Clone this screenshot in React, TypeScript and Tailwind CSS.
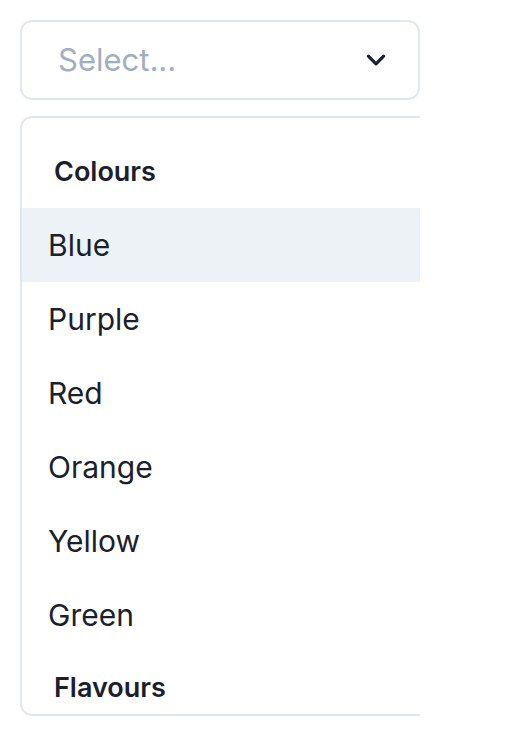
import React from 'react';

const colours = ['Blue', 'Purple', 'Red', 'Orange', 'Yellow', 'Green'];

const ChevronDown = () => (
  <svg width="26" height="26" viewBox="0 0 24 24" fill="none" stroke="#1a202c" strokeWidth="3" strokeLinecap="round" strokeLinejoin="round">
    <path d="M5 8.5l7 7 7-7" />
  </svg>
);

const App: React.FC = () => {
  return (
    <div className="min-h-screen bg-white p-[20px] font-['Inter',sans-serif] text-[#1a202c]">
      <div className="w-[400px]">
        <div className="flex h-[80px] items-center justify-between rounded-[12px] border-2 border-[#e2e8f0] pl-[36px] pr-[29px]">
          <span className="text-[31px] text-[#a0aec0]">Select...</span>
          <ChevronDown />
        </div>
        <div className="mt-[16px] w-[400px] overflow-hidden">
          <div className="h-[600px] w-[440px] overflow-hidden rounded-[12px] border-2 border-[#e2e8f0] pt-[18px]">
            <div className="flex h-[72px] items-center px-[32px] text-[27px] font-semibold">Colours</div>
            {colours.map((c, i) => (
              <div
                key={c}
                className={`flex h-[74px] items-center px-[26px] text-[30px] ${i === 0 ? 'bg-[#edf2f7]' : ''}`}
              >
                {c}
              </div>
            ))}
            <div className="flex h-[72px] items-center px-[32px] text-[27px] font-semibold">Flavours</div>
          </div>
        </div>
      </div>
    </div>
  );
};

export default App;
